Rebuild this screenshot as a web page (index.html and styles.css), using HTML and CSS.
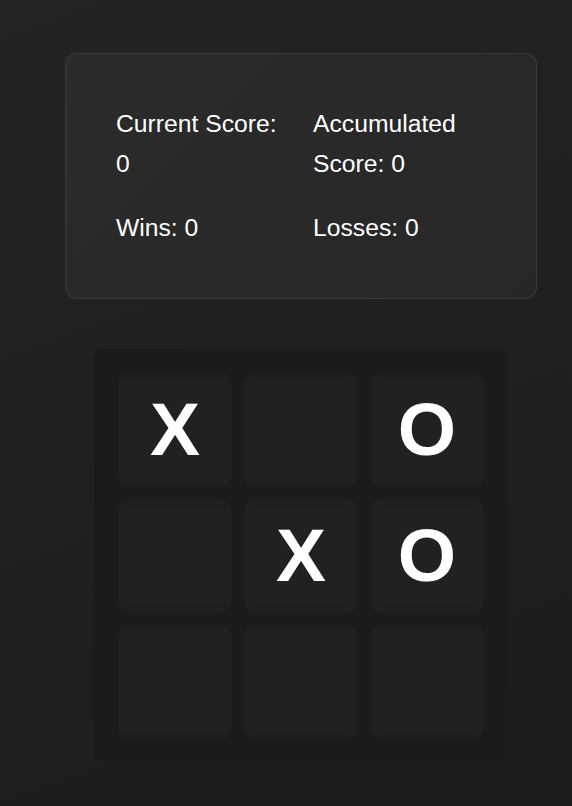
FILE: index.html
```html
<!DOCTYPE html>
<html lang="en">
<head>
<meta charset="utf-8">
<title>Tic Tac Toe</title>
<link rel="stylesheet" href="styles.css">
</head>
<body>
<main class="app">
  <section class="scoreboard">
    <div class="stat">Current Score: 0</div>
    <div class="stat">Accumulated Score: 0</div>
    <div class="stat">Wins: 0</div>
    <div class="stat">Losses: 0</div>
  </section>
  <section class="board">
    <div class="cell">X</div>
    <div class="cell"></div>
    <div class="cell">O</div>
    <div class="cell"></div>
    <div class="cell">X</div>
    <div class="cell">O</div>
    <div class="cell"></div>
    <div class="cell"></div>
    <div class="cell"></div>
  </section>
</main>
</body>
</html>
```
FILE: styles.css
```css
html, body {
  margin: 0;
  padding: 0;
}
body {
  min-height: 806px;
  background: linear-gradient(160deg, #242424 0%, #1f1f1f 60%, #1c1c1c 100%);
  font-family: "Liberation Sans", Arial, sans-serif;
  color: #ffffff;
  overflow: hidden;
}
.app {
  box-sizing: border-box;
  display: flex;
  flex-direction: column;
  align-items: center;
  width: 572px;
  padding: 53px 0 0 30px;
}
.scoreboard {
  box-sizing: border-box;
  width: 472px;
  padding: 50px;
  border: 1px solid rgba(255, 255, 255, 0.08);
  border-radius: 12px;
  background: linear-gradient(135deg, #2b2b2b 0%, #272727 100%);
  display: grid;
  grid-template-columns: 1fr 1fr;
  column-gap: 24px;
  row-gap: 25px;
  font-size: 24.7px;
  line-height: 39.5px;
}
.board {
  margin-top: 50px;
  box-sizing: border-box;
  width: 414px;
  padding: 24px;
  border-radius: 9px;
  background: #1b1b1b;
  display: grid;
  grid-template-columns: repeat(3, 114px);
  grid-auto-rows: 114px;
  gap: 12px;
}
.cell {
  border-radius: 10px;
  background: #212121;
  box-shadow: inset 0 0 8px rgba(0, 0, 0, 0.12);
  display: flex;
  align-items: center;
  justify-content: center;
  font-size: 75px;
  font-weight: bold;
  color: #ffffff;
  line-height: 1;
}
```
